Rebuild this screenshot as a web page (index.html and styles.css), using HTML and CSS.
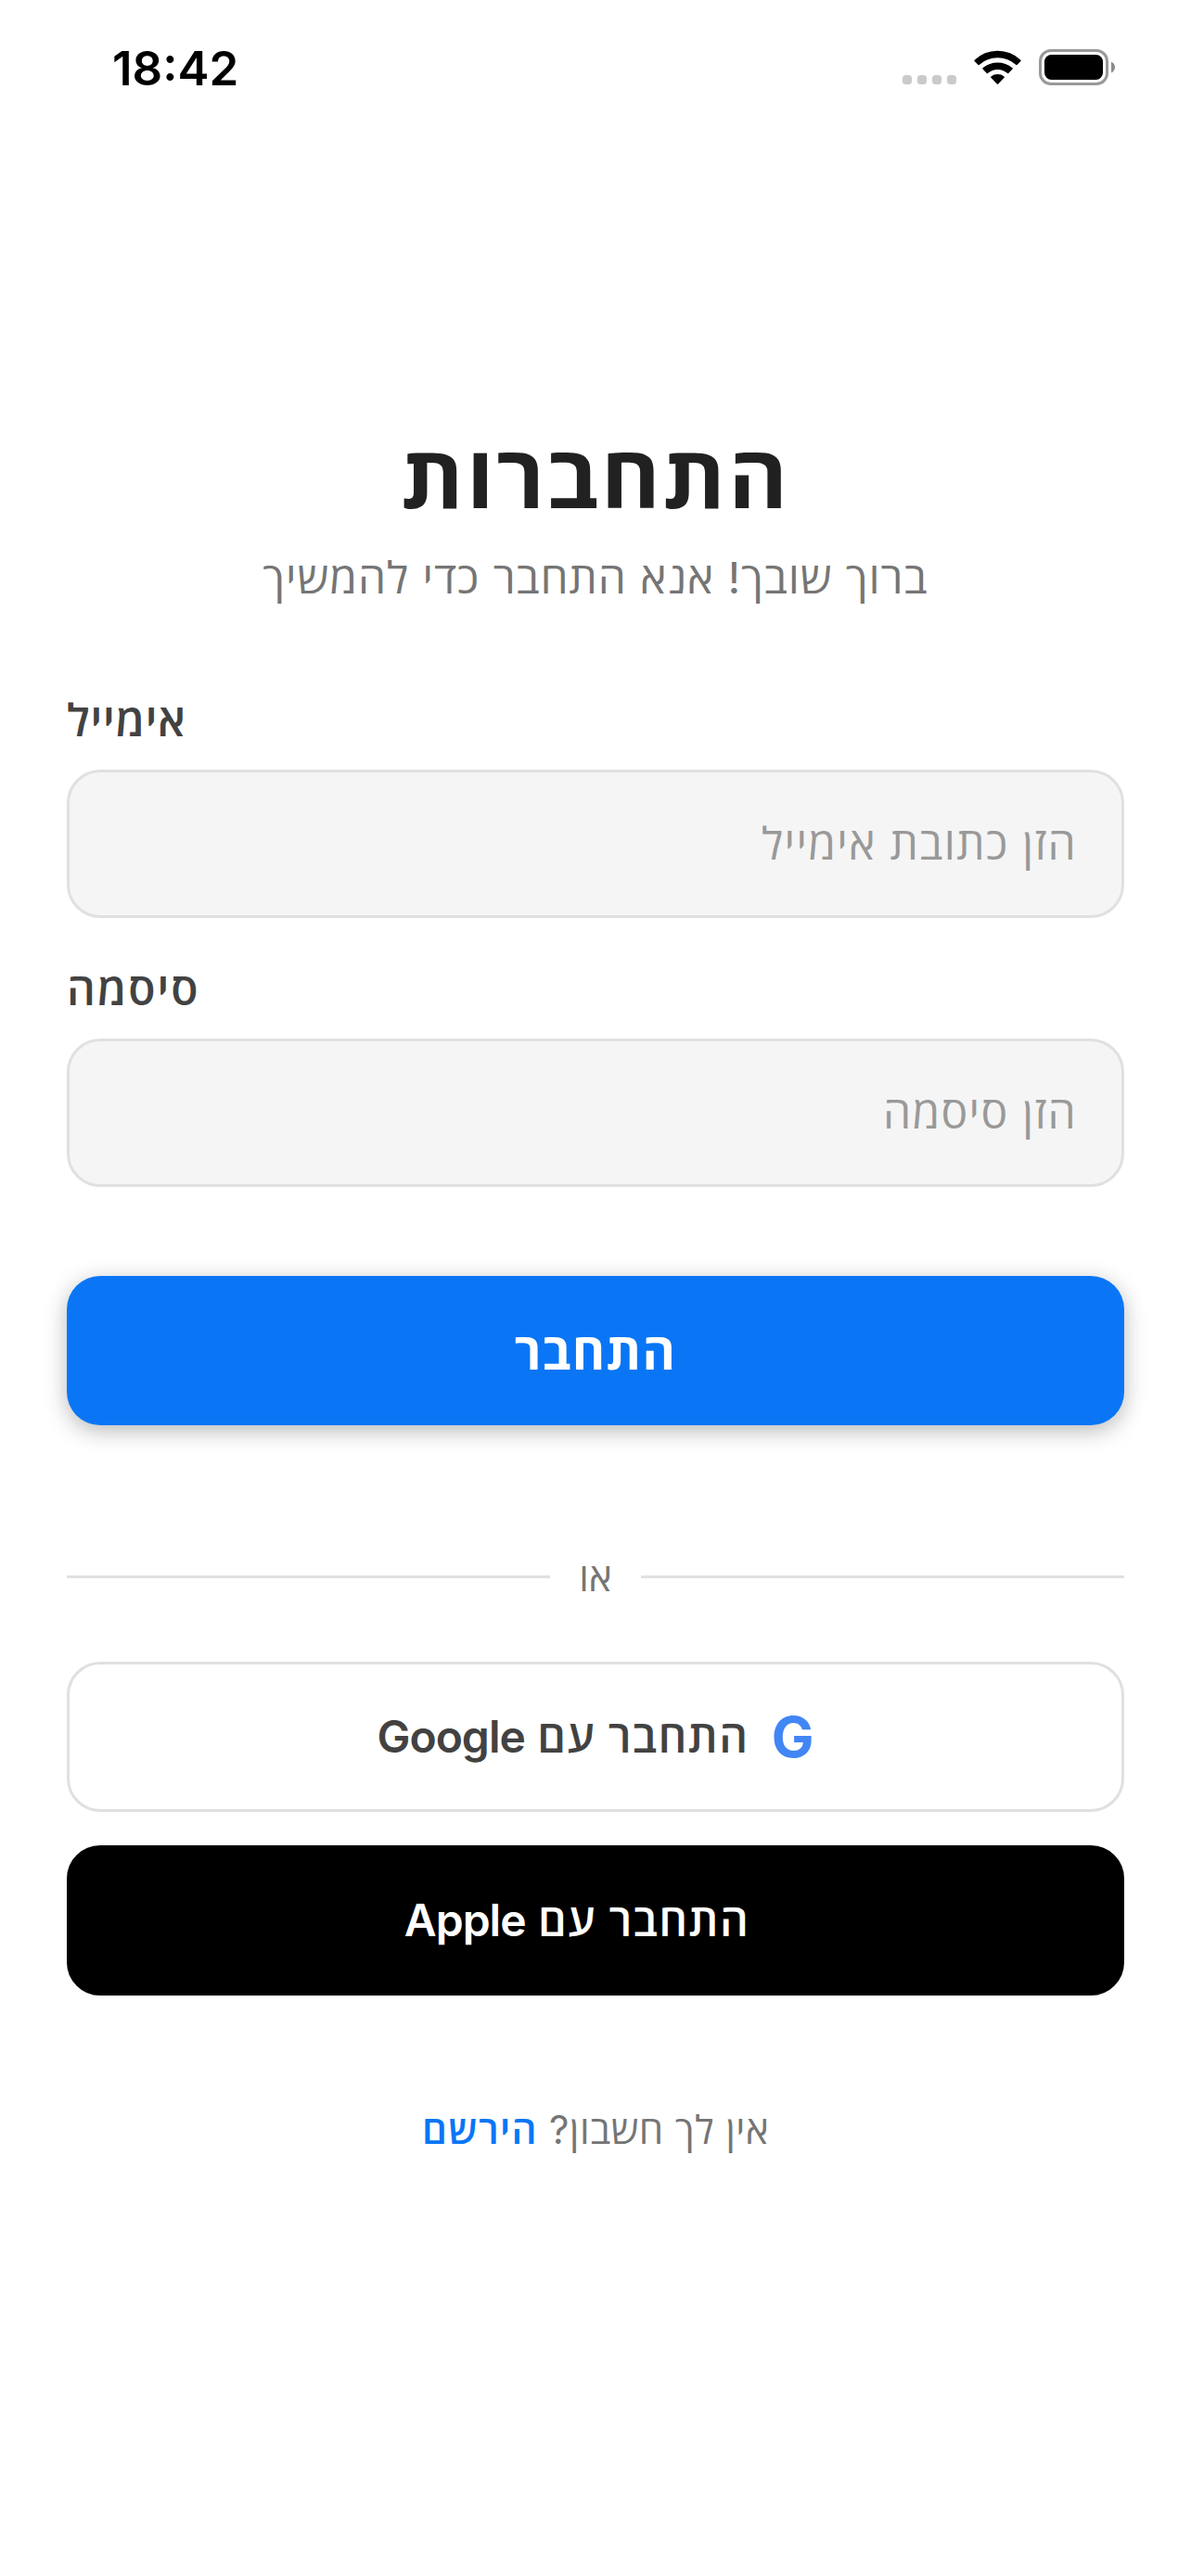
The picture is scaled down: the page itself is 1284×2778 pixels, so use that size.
FILE: index.html
```html
<!DOCTYPE html>
<html lang="he">
<head>
<meta charset="utf-8">
<title>התחברות</title>
<link rel="stylesheet" href="styles.css">
</head>
<body>
<header class="status">
  <span class="time">18:42</span>
  <div class="indicators">
    <svg class="cell" width="58" height="10" viewBox="0 0 58 10" fill="#cacaca"><rect width="10" height="10" rx="3.500"/><rect x="16" width="10" height="10" rx="3.500"/><rect x="32" width="10" height="10" rx="3.500"/><rect x="48" width="10" height="10" rx="3.500"/></svg>
    <svg class="wifi" width="51" height="38" viewBox="0 0 51 38"><path d="M.6 10.800Q11 .8 25.500.8T50.400 10.800Q51 11.400 50.400 12L46.400 15.900Q45.800 16.400 45.100 15.800 37 8.300 25.500 8.300T5.900 15.800Q5.200 16.400 4.600 15.900L.6 12Q0 11.400.6 10.800ZM9.500 19.300Q16.500 13.400 25.500 13.400T41.500 19.300Q42.200 20 41.500 20.600L37.200 24.900Q36.500 25.400 35.800 24.800 31.500 20.900 25.500 20.900T15.200 24.800Q14.500 25.400 13.800 24.900L9.500 20.600Q8.800 20 9.500 19.300ZM18.400 28.400Q21.400 26 25.500 26T32.600 28.400Q33.300 29 32.600 29.700L26.200 36.400Q25.500 37.200 24.800 36.400L18.400 29.700Q17.700 29 18.400 28.400Z"/></svg>
    <svg class="battery" width="82" height="39" viewBox="0 0 82 39"><rect x="1.500" y="1.500" width="72" height="36" rx="11.500" fill="none" stroke="#999" stroke-width="3"/><rect x="6" y="6" width="63" height="27" rx="7.500"/><path d="M78 13.500q4 2 4 6t-4 6Z" fill="#8c8c8c"/></svg>
  </div>
</header>
<main class="login">
  <h1 class="title" dir="rtl">התחברות</h1>
  <p class="subtitle" dir="rtl">ברוך שובך! אנא התחבר כדי להמשיך</p>
  <label class="label label-email">אימייל</label>
  <div class="field" dir="rtl">הזן כתובת אימייל</div>
  <label class="label label-password">סיסמה</label>
  <div class="field" dir="rtl">הזן סיסמה</div>
  <button class="submit">התחבר</button>
  <div class="divider"><span>או</span></div>
  <button class="social google" dir="rtl"><b class="mark">G</b><span>התחבר עם <span class="brand">Google</span></span></button>
  <button class="social apple" dir="rtl"><b class="mark"></b><span>התחבר עם <span class="brand">Apple</span></span></button>
  <p class="signup" dir="rtl">אין לך חשבון? <a>הירשם</a></p>
</main>
</body>
</html>
```
FILE: styles.css
```css
* { box-sizing: border-box; }
body { margin: 0; background: #fff; font-family: Inter, "Open Sans", "Noto Sans", sans-serif; color: #424242; }
button { font-family: inherit; }
.status { height: 140px; padding: 48px 82px 0 121px; display: flex; justify-content: space-between; align-items: flex-start; }
.time { font-size: 51px; line-height: 51px; font-weight: 600; color: #000; }
.indicators { display: flex; gap: 19px; align-items: center; padding-top: 5px; }
.cell { margin-top: 27px; }
.login { padding: 317px 72px 0; display: flex; flex-direction: column; }
.title { margin: 0; height: 114px; line-height: 114px; font-size: 94px; font-weight: 700; letter-spacing: 2.500px; text-align: center; color: #212121; transform: scaleX(1.035); }
.subtitle { margin: 22px 0 0; height: 60px; line-height: 60px; font-size: 47px; letter-spacing: .9px; text-align: center; color: #757575; transform: scaleX(1.02); }
.label { height: 60px; line-height: 62px; font-size: 48px; font-weight: 600; }
.label-email { margin: 93px 0 24px; letter-spacing: .8px; }
.label-password { margin: 46px 0 24px; letter-spacing: 2px; }
.field { height: 160px; border: 3px solid #e0e0e0; border-radius: 36px; background: #f5f5f5; padding: 0 48px; font-size: 48px; line-height: 154px; letter-spacing: 1.300px; color: #999; }
.submit { margin: 96px 0 0; padding: 0; height: 161px; border: 0; border-radius: 36px; background: #0a76f5; color: #fff; font-size: 54px; line-height: 163px; font-weight: 700; letter-spacing: 1.200px; box-shadow: 0 6px 24px rgba(0, 0, 0, .28); }
.divider { margin-top: 134px; height: 59px; display: flex; align-items: center; gap: 32px; font-size: 42px; line-height: 59px; color: #757575; }
.divider span { width: 34px; display: flex; justify-content: center; }
.divider::before, .divider::after { content: ""; flex: 1; height: 3px; background: #e0e0e0; }
.social { margin: 62px 0 0; padding: 0; height: 162px; border: 3px solid #e0e0e0; border-radius: 36px; background: #fff; color: #424242; display: flex; align-items: center; justify-content: center; gap: 27px; font-size: 48px; line-height: 60px; font-weight: 600; letter-spacing: 1.400px; }
.brand { letter-spacing: -1px; }
.mark { width: 43px; font-size: 61px; font-weight: 700; letter-spacing: 0; color: #4285f4; }
.apple { margin-top: 36px; border-color: #000; background: #000; color: #fff; }
.apple .mark { width: 13px; }
.signup { margin: 115px 0 0; font-size: 42px; line-height: 60px; letter-spacing: .5px; text-align: center; color: #757575; }
.signup a { color: #0a76f5; font-weight: 600; letter-spacing: 1.400px; }
```
